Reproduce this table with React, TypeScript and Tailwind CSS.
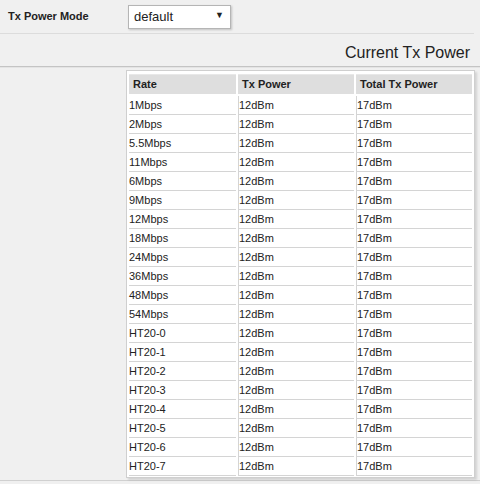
const rates = [
  "1Mbps", "2Mbps", "5.5Mbps", "11Mbps", "6Mbps", "9Mbps", "12Mbps", "18Mbps",
  "24Mbps", "36Mbps", "48Mbps", "54Mbps",
  "HT20-0", "HT20-1", "HT20-2", "HT20-3", "HT20-4", "HT20-5", "HT20-6", "HT20-7",
];

export default function App() {
  return (
    <div className="w-[480px] h-[484px] overflow-hidden bg-[#f0f0f0] text-[#222] font-['Liberation_Sans',Arial,sans-serif]">
      {/* mode row */}
      <div className="flex items-center h-[34px] w-[474px] border-b border-[#dcdcdc]">
        <div className="w-[128px] pl-[8px] text-[11px] font-bold">Tx Power Mode</div>
        <div className="relative w-[103px] h-[24px] bg-white border border-[#b5b5b5] shadow-[1px_1px_2px_rgba(0,0,0,0.2)] flex items-center pl-[5px] text-[13px]">
          default
          <span className="absolute right-[6px] top-[5px] text-[9px] leading-none">▼</span>
        </div>
      </div>

      {/* heading */}
      <div className="h-[33px] flex items-end justify-end pr-[10px] pb-[4px] text-[16px] leading-[18px] border-b border-[#c4c4c4]">
        Current Tx Power
      </div>

      <div className="flex border-t border-[#e4e4e4] border-b border-b-[#d0d0d0] pt-[2px] pb-[2px]">
        <div className="w-[126px]" />
        <div className="w-[349px] bg-white border border-[#cfcfcf] shadow-[2px_2px_2px_rgba(0,0,0,0.12)] pt-[3px] pb-[1px]">
          <table className="border-separate border-spacing-x-[2px] border-spacing-y-0 text-[11px] leading-none">
            <thead>
              <tr className="h-[22px]">
                <th className="w-[107px] bg-[#dedede] text-left font-bold pl-[4px] border-t border-[#e8e8e8] border-b-2 border-b-white">Rate</th>
                <th className="w-[116px] bg-[#dedede] text-left font-bold pl-[4px] border-t border-[#e8e8e8] border-b-2 border-b-white">Tx Power</th>
                <th className="w-[116px] bg-[#dedede] text-left font-bold pl-[4px] border-t border-[#e8e8e8] border-b-2 border-b-white">Total Tx Power</th>
              </tr>
            </thead>
            <tbody>
              {rates.map((r) => (
                <tr key={r} className="h-[19px]">
                  <td className="p-0 border-b border-[#d4d4d4]">{r}</td>
                  <td className="p-0 border-b border-l border-[#d4d4d4]">12dBm</td>
                  <td className="p-0 border-b border-l border-[#d4d4d4]">17dBm</td>
                </tr>
              ))}
            </tbody>
          </table>
        </div>
      </div>
    </div>
  );
}
